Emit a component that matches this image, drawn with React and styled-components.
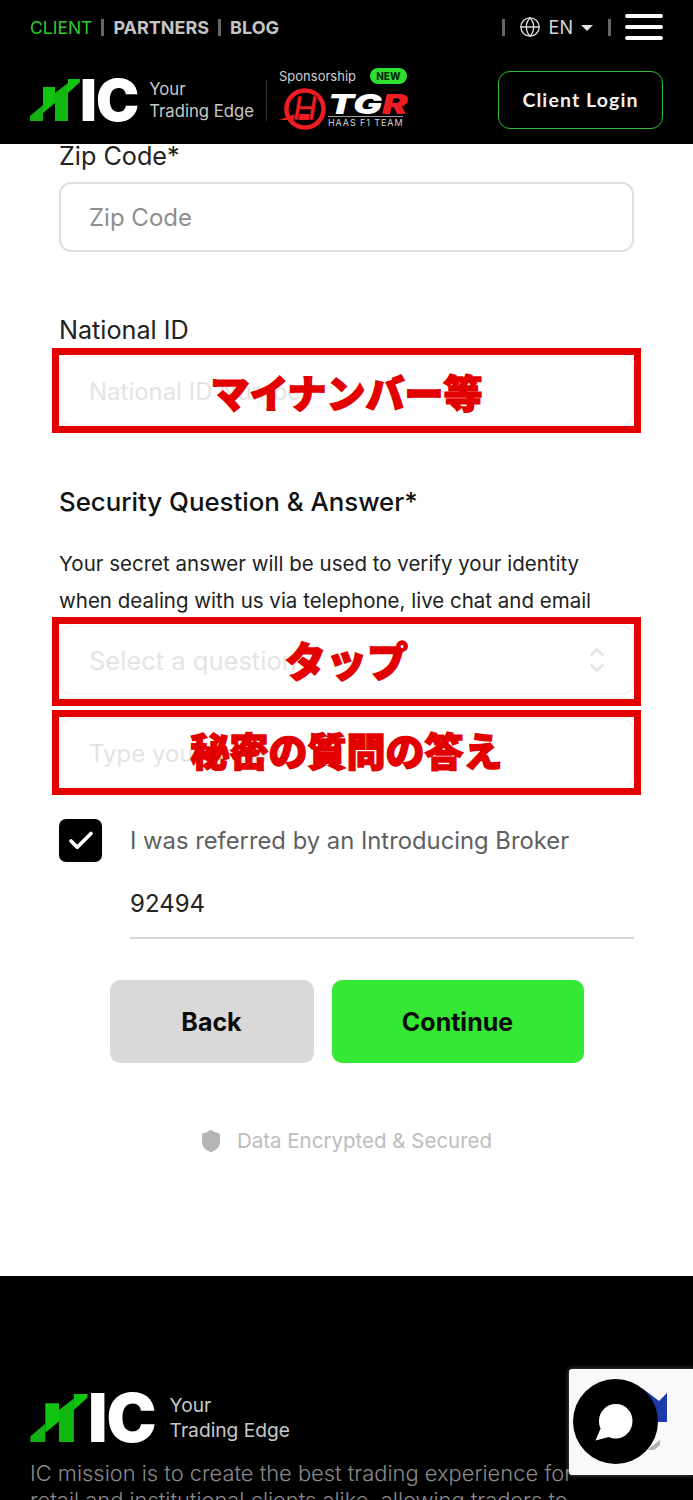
import React from "react";
import styled, { createGlobalStyle } from "styled-components";
import { Check, ChevronDown, ChevronUp, Globe, Shield } from "lucide-react";

const GlobalStyle = createGlobalStyle`
  html, body {
    margin: 0;
    padding: 0;
    background: #fff;
  }
  body {
    font-family: Inter, "Noto Sans", sans-serif;
  }
  * {
    box-sizing: border-box;
  }
`;

const Page = styled.div`
  width: 693px;
  height: 1500px;
  overflow: hidden;
  position: relative;
`;

const Header = styled.header`
  height: 144px;
  background: #000;
  padding: 11px 30px 0;
  display: flex;
  flex-direction: column;
`;

const TopRow = styled.div`
  display: flex;
  align-items: center;
  justify-content: space-between;
  height: 32px;
`;

const SiteNav = styled.nav`
  display: flex;
  align-items: center;
  gap: 9px;
`;

const NavLink = styled.span`
  color: ${(p) => (p.$active ? "#2ecc2e" : "#c4c4c4")};
  font-size: ${(p) => (p.$active ? 17.5 : 18)}px;
  font-weight: ${(p) => (p.$active ? 400 : 700)};
`;

const NavBar = styled.span`
  width: 3px;
  height: 17px;
  background: #666;
`;

const TopActions = styled.div`
  display: flex;
  align-items: center;
  color: #d8d8d8;
  font-size: 18px;
`;

const LangPicker = styled.div`
  display: flex;
  align-items: center;
  gap: 8px;
  margin: 0 15px 0 14px;
`;

const Caret = styled.span`
  width: 0;
  height: 0;
  border-left: 6px solid transparent;
  border-right: 6px solid transparent;
  border-top: 6px solid #e4e4e4;
  margin-top: 1px;
`;

const Burger = styled.div`
  display: flex;
  flex-direction: column;
  gap: 7px;
  margin-left: 14px;
  span {
    display: block;
    width: 38px;
    height: 4px;
    border-radius: 2px;
    background: #fff;
  }
`;

const BrandRow = styled.div`
  display: flex;
  align-items: center;
  margin-top: 21px;
  height: 72px;
`;

const LogoWrap = styled.div`
  display: flex;
  align-items: center;
`;

const LogoLetters = styled.span`
  color: #fff;
  font-family: Inter, sans-serif;
  font-weight: 900;
  font-size: ${(p) => p.$size}px;
  line-height: 1;
  letter-spacing: -1px;
`;

const Tagline = styled.div`
  color: #c8c8c8;
  font-size: ${(p) => p.$size}px;
  line-height: ${(p) => p.$line}px;
  margin-left: ${(p) => p.$gap}px;
  white-space: nowrap;
`;

const BrandDivider = styled.span`
  width: 1px;
  height: 41px;
  background: #333;
  margin: 0 12px;
`;

const Sponsor = styled.div`
  display: flex;
  flex-direction: column;
  width: 128px;
  margin-top: -2px;
`;

const SponsorTop = styled.div`
  display: flex;
  align-items: center;
  justify-content: space-between;
  color: #d0d0d0;
  font-size: 13px;
  line-height: 16px;
`;

const NewBadge = styled.span`
  background: #2fe02f;
  color: #06300a;
  font-size: 10px;
  font-weight: 800;
  line-height: 16px;
  padding: 0 6.5px;
  border-radius: 8px;
`;

const TeamLogo = styled.div`
  display: flex;
  align-items: center;
  height: 44px;
  margin-top: 3px;
`;

const TeamText = styled.div`
  display: flex;
  flex-direction: column;
  margin: 4px 0 0 1px;
`;

const TeamMark = styled.div`
  font-weight: 900;
  font-style: italic;
  font-size: 27px;
  line-height: 22px;
  color: #fff;
  transform: scaleX(1.42);
  transform-origin: left center;
  white-space: nowrap;
  em {
    color: #f01c24;
  }
`;

const TeamName = styled.div`
  border-top: 1px solid #999;
  color: #d8d8d8;
  font-size: 9px;
  line-height: 9px;
  letter-spacing: 0.9px;
  padding-top: 1px;
  white-space: nowrap;
`;

const LoginButton = styled.button`
  margin-left: auto;
  width: 165px;
  height: 58px;
  background: transparent;
  border: 1px solid #2ebd2e;
  border-radius: 12px;
  color: #f0f0f0;
  font-family: Lato, sans-serif;
  font-size: 19.5px;
  font-weight: 700;
  letter-spacing: 1.1px;
  padding-bottom: 3px;
`;

const Form = styled.main`
  padding: 0 59px;
  height: 1132px;
  display: flex;
  flex-direction: column;
`;

const Label = styled.label`
  display: block;
  color: #222;
  font-size: 25.2px;
  line-height: 26px;
  margin-top: ${(p) => p.$top}px;
`;

const FieldWrap = styled.div`
  position: relative;
  margin-top: ${(p) => p.$top}px;
`;

const Field = styled.div`
  height: 70px;
  border: 2px solid ${(p) => (p.$faint ? "#f6f6f6" : "#dfdfdf")};
  border-radius: 12px;
  padding: 0 28px;
  display: flex;
  align-items: center;
  justify-content: space-between;
  font-size: ${(p) => p.$size || 24}px;
  color: ${(p) => (p.$faint ? "#e4e4e4" : "#8e8e8e")};
`;

const Stepper = styled.span`
  display: flex;
  flex-direction: column;
  color: #e6e6e6;
  margin-right: -4px;
  svg {
    display: block;
    margin: -3px 0;
  }
`;

const Callout = styled.div`
  position: absolute;
  inset: -8px -7px ${(p) => p.$bottom}px;
  border: 7px solid #e30000;
  padding-bottom: ${(p) => p.$lift || 0}px;
  display: flex;
  align-items: center;
  justify-content: center;
  color: #e30000;
  font-family: "Noto Sans CJK JP", sans-serif;
  font-size: ${(p) => p.$size || 39}px;
  font-weight: 900;
  -webkit-text-stroke: 1.5px #e30000;
  white-space: nowrap;
`;

const SectionTitle = styled.h2`
  margin: 60px 0 0;
  color: #111;
  font-size: 25.8px;
  line-height: 32px;
  font-weight: 500;
`;

const HelpText = styled.p`
  margin: 27px 0 0;
  color: #222;
  font-size: 20.5px;
  line-height: 37px;
  white-space: nowrap;
`;

const ReferralRow = styled.div`
  display: flex;
  align-items: center;
  margin-top: 31px;
`;

const CheckBox = styled.span`
  width: 43px;
  height: 43px;
  border-radius: 7px;
  background: #000;
  color: #fff;
  display: flex;
  align-items: center;
  justify-content: center;
`;

const CheckLabel = styled.span`
  margin-left: 28px;
  color: #5f5f5f;
  font-size: 23.8px;
  white-space: nowrap;
`;

const ReferralInput = styled.div`
  margin: 21px 0 0 71px;
  height: 56px;
  border-bottom: 2px solid #d6d6d6;
  color: #222;
  font-size: 24px;
  line-height: 42px;
`;

const Actions = styled.div`
  display: flex;
  justify-content: center;
  gap: 18px;
  margin-top: 41px;
`;

const ActionButton = styled.button`
  width: ${(p) => p.$width}px;
  height: 83px;
  border: none;
  border-radius: 10px;
  background: ${(p) => (p.$primary ? "#34e834" : "#d9d9d9")};
  color: #0b0b0b;
  font-family: Inter, sans-serif;
  font-size: 25px;
  font-weight: 700;
`;

const SecureNote = styled.div`
  display: flex;
  align-items: center;
  justify-content: center;
  gap: 14px;
  margin-top: 62px;
  color: #bdbdbd;
  font-size: 20.5px;
  line-height: 32px;
  svg {
    margin-left: -2px;
  }
`;

const Footer = styled.footer`
  background: #000;
  height: 224px;
  padding: 108px 30px 0;
`;

const Mission = styled.p`
  margin: 9px 0 0;
  width: 560px;
  color: #8a8a8a;
  font-size: 21.9px;
  line-height: 27px;
  font-weight: 300;
`;

const Recaptcha = styled.div`
  position: fixed;
  right: 0;
  top: 1369px;
  width: 124px;
  height: 106px;
  background: #f9f9f9;
  border-radius: 3px 0 0 3px;
  box-shadow: 0 0 5px rgba(255, 255, 255, 0.35);
  svg {
    position: absolute;
    left: 0;
    top: 0;
  }
`;

const ChatBubble = styled.div`
  position: fixed;
  left: 573px;
  top: 1379px;
  width: 85px;
  height: 85px;
  border-radius: 50%;
  background: #000;
  display: flex;
  align-items: center;
  justify-content: center;
  svg {
    margin-right: 4px;
  }
`;

// green staircase part of the company logo
const LogoMark = ({ width, height }) => (
  <svg width={width} height={height} viewBox="0 0 50 42" aria-hidden="true">
    <polygon points="0,37 13,26 13,42 0,42" fill="#12b012" />
    <polygon points="13,8 25,8 25,24 13,34" fill="#10c410" />
    <polygon points="25,14 38,4 38,42 25,42" fill="#12b812" />
    <polygon points="38,0 50,0 50,3 38,14" fill="#10c410" />
  </svg>
);

const Logo = ({ markWidth, markHeight, letters, tagSize, tagLine, tagGap }) => (
  <LogoWrap>
    <LogoMark width={markWidth} height={markHeight} />
    <LogoLetters $size={letters}>IC</LogoLetters>
    <Tagline $size={tagSize} $line={tagLine} $gap={tagGap}>
      Your
      <br />
      Trading Edge
    </Tagline>
  </LogoWrap>
);

// round team emblem with its wing
const TeamEmblem = () => (
  <svg width="48" height="44" viewBox="0 0 48 44" aria-hidden="true">
    <circle cx="26" cy="22" r="18.5" fill="none" stroke="#f01c24" strokeWidth="4.5" />
    <polygon points="0,33 16,27 34,27 30,33" fill="#f01c24" />
    <text
      x="26"
      y="33"
      textAnchor="middle"
      fill="#f01c24"
      fontFamily="Inter, sans-serif"
      fontSize="32"
      fontWeight="600"
      fontStyle="italic"
      stroke="#000"
      strokeWidth="0.6"
    >
      H
    </text>
  </svg>
);

const App = () => {
  return (
    <Page>
      <GlobalStyle />
      <Header>
        <TopRow>
          <SiteNav>
            <NavLink $active>CLIENT</NavLink>
            <NavBar />
            <NavLink>PARTNERS</NavLink>
            <NavBar />
            <NavLink>BLOG</NavLink>
          </SiteNav>
          <TopActions>
            <NavBar />
            <LangPicker>
              <Globe size={22} strokeWidth={1.5} />
              EN
              <Caret />
            </LangPicker>
            <NavBar />
            <Burger>
              <span />
              <span />
              <span />
            </Burger>
          </TopActions>
        </TopRow>
        <BrandRow>
          <Logo markWidth={50} markHeight={42} letters={58} tagSize={16.7} tagLine={22} tagGap={11} />
          <BrandDivider />
          <Sponsor>
            <SponsorTop>
              Sponsorship
              <NewBadge>NEW</NewBadge>
            </SponsorTop>
            <TeamLogo>
              <TeamEmblem />
              <TeamText>
                <TeamMark>
                  TG<em>R</em>
                </TeamMark>
                <TeamName>HAAS F1 TEAM</TeamName>
              </TeamText>
            </TeamLogo>
          </Sponsor>
          <LoginButton>Client Login</LoginButton>
        </BrandRow>
      </Header>

      <Form>
        <Label $top={-1}>Zip Code*</Label>
        <FieldWrap $top={13}>
          <Field>Zip Code</Field>
        </FieldWrap>

        <Label $top={65}>National ID</Label>
        <FieldWrap $top={13}>
          <Field $faint>National ID Number</Field>
          <Callout $bottom={-7}>マイナンバー等</Callout>
        </FieldWrap>

        <SectionTitle>Security Question &amp; Answer*</SectionTitle>
        <HelpText>
          Your secret answer will be used to verify your identity
          <br />
          when dealing with us via telephone, live chat and email
        </HelpText>

        <FieldWrap $top={6}>
          <Field $faint $size={25.5}>
            Select a question
            <Stepper>
              <ChevronUp size={22} strokeWidth={3} />
              <ChevronDown size={22} strokeWidth={3} />
            </Stepper>
          </Field>
          <Callout $bottom={-11} $size={41} $lift={6}>
            タップ
          </Callout>
        </FieldWrap>
        <FieldWrap $top={23}>
          <Field $faint>Type your answer</Field>
          <Callout $bottom={-7} $lift={7}>
            秘密の質問の答え
          </Callout>
        </FieldWrap>

        <ReferralRow>
          <CheckBox>
            <Check size={30} strokeWidth={3} />
          </CheckBox>
          <CheckLabel>I was referred by an Introducing Broker</CheckLabel>
        </ReferralRow>
        <ReferralInput>92494</ReferralInput>

        <Actions>
          <ActionButton $width={204}>Back</ActionButton>
          <ActionButton $width={252} $primary>
            Continue
          </ActionButton>
        </Actions>

        <SecureNote>
          <Shield size={24} fill="#b5b5b5" stroke="#b5b5b5" />
          Data Encrypted &amp; Secured
        </SecureNote>
      </Form>

      <Footer>
        <Logo markWidth={58} markHeight={48} letters={67} tagSize={19.2} tagLine={25} tagGap={14} />
        <Mission>
          IC mission is to create the best trading experience for retail and institutional clients alike, allowing traders to
        </Mission>
      </Footer>

      <Recaptcha>
        <svg width="124" height="106" viewBox="0 0 124 106" aria-hidden="true">
          <polygon points="73,19 90,32 98,24 98,53 85,53" fill="#1c3aa9" />
          <polygon points="78,81 91,71 91,76 85,81" fill="#b0b0b0" />
        </svg>
      </Recaptcha>
      <ChatBubble>
        <svg width="38" height="38" viewBox="0 0 38 38" aria-hidden="true">
          <path
            d="M21 1 C11.5 1 4 8.5 4 18 C4 21 4.6 23.5 5.6 25.5 L0.5 37.5 L14 34 C16 35 18.5 35.5 21 35.5 C30.5 35.5 37.5 27.5 37.5 18 C37.5 8.5 30.5 1 21 1 Z"
            fill="#fff"
          />
        </svg>
      </ChatBubble>
    </Page>
  );
};

export default App;
